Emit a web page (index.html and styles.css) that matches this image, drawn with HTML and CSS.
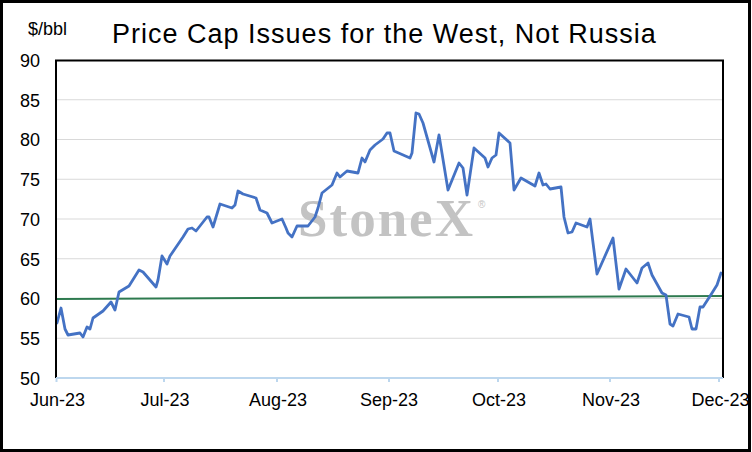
FILE: index.html
```html
<!DOCTYPE html>
<html lang="en">
<head>
<meta charset="utf-8">
<title>Price Cap Issues for the West, Not Russia</title>
<link rel="stylesheet" href="styles.css">
</head>
<body>
<div class="chart">
  <header class="chart-head">
    <span class="unit">$/bbl</span>
    <h1 class="title">Price Cap Issues for the West, Not Russia</h1>
  </header>
  <svg class="plot" width="745" height="399" viewBox="3 50 745 399" xmlns="http://www.w3.org/2000/svg">
    <g class="grid">
      <line x1="57" x2="722" y1="99.75" y2="99.75"/>
      <line x1="57" x2="722" y1="139.5" y2="139.5"/>
      <line x1="57" x2="722" y1="179.25" y2="179.25"/>
      <line x1="57" x2="722" y1="219" y2="219"/>
      <line x1="57" x2="722" y1="258.75" y2="258.75"/>
      <line x1="57" x2="722" y1="298.5" y2="298.5"/>
      <line x1="57" x2="722" y1="338.25" y2="338.25"/>
    </g>
    <text class="watermark" x="298" y="236">StoneX<tspan class="reg" dx="3" dy="-28">®</tspan></text>
    <line class="cap" x1="56" y1="299" x2="722" y2="296"/>
    <polyline class="price" points="57,323 61,308 65,329 68,335 80,333 83,337 87,327 90,329 93,318 103,311 111,302 115,310 119,292 129,286 139,270 143,272 156,287 158,280 162,256 167,264 170,256 183,237 188,229 192,228 196,231 207,217 209,217 213,227 220,204 232,208 235,205 238,191 243,194 256,198 260,210 267,213 272,223 282,219 286,228 288,233 292,237 297,226 308,226 315,217 318,208 322,193 332,185 337,173 340,177 347,171 358,173 362,158 365,162 370,150 375,145 383,139 387,133 390,133 394,151 410,158 412,153 416,113 419,114 423,123 434,162 439,135 448,190 459,163 463,168 467,195 474,148 485,158 488,167 492,158 496,155 499,133 510,143 514,190 521,178 535,186 539,173 543,185 546,184 550,189 561,187 564,217 568,233 572,232 576,223 587,227 590,219 597,274 613,238 619,289 626,269 637,283 642,268 648,263 652,275 662,293 666,295 670,324 673,326 678,314 689,317 692,329 696,329 700,307 703,307 712,293 717,285 721,273"/>
    <g class="frame">
      <line x1="55" y1="60.5" x2="724" y2="60.5"/>
      <line x1="56" y1="60" x2="56" y2="378"/>
      <line x1="723" y1="60" x2="723" y2="378"/>
    </g>
    <g class="xaxis">
      <line x1="56" y1="378" x2="723" y2="378"/>
      <line x1="56.5" y1="378" x2="56.5" y2="382"/>
      <line x1="164" y1="378" x2="164" y2="382"/>
      <line x1="277" y1="378" x2="277" y2="382"/>
      <line x1="389" y1="378" x2="389" y2="382"/>
      <line x1="498" y1="378" x2="498" y2="382"/>
      <line x1="610" y1="378" x2="610" y2="382"/>
      <line x1="719" y1="378" x2="719" y2="382"/>
    </g>
    <g class="ylabels">
      <text x="40" y="67">90</text>
      <text x="40" y="106.5">85</text>
      <text x="40" y="146">80</text>
      <text x="40" y="186">75</text>
      <text x="40" y="225.5">70</text>
      <text x="40" y="265.5">65</text>
      <text x="40" y="305">60</text>
      <text x="40" y="345">55</text>
      <text x="40" y="384.5">50</text>
    </g>
    <g class="xlabels">
      <text x="57.5" y="406">Jun-23</text>
      <text x="165" y="406">Jul-23</text>
      <text x="278" y="406">Aug-23</text>
      <text x="389" y="406">Sep-23</text>
      <text x="499" y="406">Oct-23</text>
      <text x="611" y="406">Nov-23</text>
      <text x="720.5" y="406">Dec-23</text>
    </g>
  </svg>
</div>
</body>
</html>
```
FILE: styles.css
```css
html, body {
  margin: 0;
  padding: 0;
  background: #ffffff;
}

.chart {
  width: 751px;
  height: 452px;
  box-sizing: border-box;
  border: 3px solid #000000;
  background: #ffffff;
  overflow: hidden;
  font-family: "Liberation Sans", Arial, sans-serif;
  color: #000000;
}

.chart-head {
  display: flex;
  align-items: flex-start;
  height: 47px;
  box-sizing: border-box;
  padding: 16px 0 0 25px;
}

.unit {
  font-size: 18px;
  line-height: 20px;
}

.title {
  margin: 0 0 0 45px;
  font-size: 27px;
  font-weight: normal;
  line-height: 30px;
  letter-spacing: 1px;
  white-space: nowrap;
}

.plot {
  display: block;
  overflow: hidden;
}

.grid line {
  stroke: #d9d9d9;
  stroke-width: 1;
}

.watermark {
  font-family: "Liberation Serif", "Times New Roman", serif;
  font-weight: bold;
  font-size: 53px;
  letter-spacing: 2px;
  fill: #c3c3c3;
}

.watermark .reg {
  font-family: "Liberation Sans", Arial, sans-serif;
  font-weight: normal;
  font-size: 10px;
  letter-spacing: 0;
}

.cap {
  stroke: #2e7a4f;
  stroke-width: 2;
}

.price {
  fill: none;
  stroke: #4472c4;
  stroke-width: 2.8;
  stroke-linejoin: round;
  stroke-linecap: round;
}

.frame line {
  stroke: #000000;
  stroke-width: 2;
}

.xaxis line {
  stroke: #bdd7ee;
  stroke-width: 2;
}

.ylabels text,
.xlabels text {
  font-family: "Liberation Sans", Arial, sans-serif;
  font-size: 18px;
  fill: #000000;
}

.ylabels text {
  text-anchor: end;
}

.xlabels text {
  text-anchor: middle;
}
```
